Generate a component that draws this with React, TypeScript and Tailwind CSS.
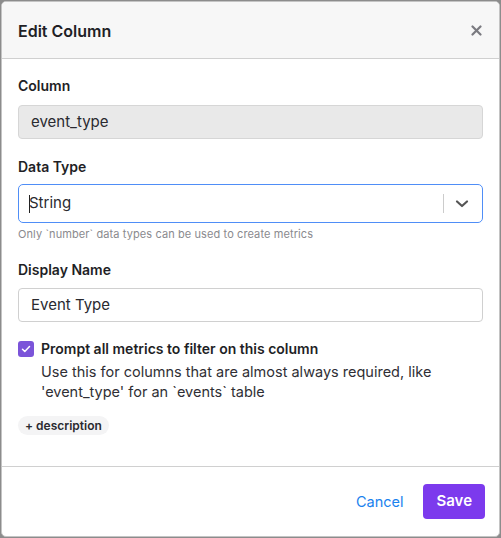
import { useState } from 'react'

export default function App() {
  const [prompt, setPrompt] = useState(true)

  return (
    <div className="h-[538px] w-[501px] bg-[#8c8c8c] p-px font-['Inter',sans-serif]">
      <div className="flex h-full flex-col overflow-hidden rounded-[5px] border border-[#c4c4c4] bg-white">
        {/* Header */}
        <div className="flex h-[57px] items-center justify-between border-b border-[#d0d0d0] bg-[#f7f7f7] pl-[16px] pr-[17px]">
          <h2 className="mt-[2px] text-[16px] font-semibold text-[#1f1f26]">Edit Column</h2>
          <svg width="11" height="11" viewBox="0 0 11 11" className="mt-px">
            <path d="M1.5 1.5l8 8M9.5 1.5l-8 8" stroke="#7a7a80" strokeWidth="2.2" strokeLinecap="round" />
          </svg>
        </div>

        {/* Body */}
        <div className="flex-1 px-[16px] pt-[18px]">
          <label className="block text-[14px] font-semibold leading-[18px] text-[#1f1f26]">Column</label>
          <div className="mt-[10px] flex h-[34px] items-center rounded-[4px] border border-[#d6d6d6] bg-[#e9e9e9] px-[12px] text-[15px] text-[#2a2a30]">
            event_type
          </div>

          <label className="mt-[19px] block text-[14px] font-semibold leading-[18px] text-[#1f1f26]">Data Type</label>
          <div className="mt-[8px] flex h-[39px] items-center rounded-[5px] border border-[#4f8ef7] bg-white pl-[10px]">
            <span className="h-[18px] w-px bg-[#222]" />
            <span className="-ml-px text-[15px] text-[#2a2a30]">String</span>
            <div className="ml-auto flex h-full items-center">
              <span className="h-[19px] w-px bg-[#cccccc]" />
              <svg width="38" height="20" viewBox="0 0 38 20">
                <path d="M13 7.5l5 4.5 5-4.5" fill="none" stroke="#555" strokeWidth="2.2" strokeLinecap="round" strokeLinejoin="round" />
              </svg>
            </div>
          </div>
          <p className="mt-[4px] text-[11px] leading-[15px] tracking-[0.1px] text-[#8a8a8e]">
            Only `number` data types can be used to create metrics
          </p>

          <label className="mt-[19px] block text-[14px] font-semibold leading-[18px] text-[#1f1f26]">Display Name</label>
          <div className="mt-[9px] flex h-[34px] items-center rounded-[4px] border border-[#d0d0d0] bg-white px-[12px] text-[15px] text-[#2a2a30]">
            Event Type
          </div>

          <div className="mt-[18px] flex items-start gap-[7px]">
            <button
              onClick={() => setPrompt(!prompt)}
              className={`mt-px flex h-[16px] w-[16px] shrink-0 items-center justify-center rounded-[3px] ${prompt ? 'bg-[#7b54d9]' : 'border border-[#aaa] bg-white'}`}
            >
              {prompt && (
                <svg width="10" height="10" viewBox="0 0 10 10">
                  <path d="M1.5 5.2l2.3 2.3 4.7-5" fill="none" stroke="white" strokeWidth="1.5" strokeLinecap="round" strokeLinejoin="round" />
                </svg>
              )}
            </button>
            <div>
              <div className="text-[14px] font-semibold leading-[18px] text-[#1f1f26]">
                Prompt all metrics to filter on this column
              </div>
              <p className="mt-[4px] text-[14.5px] leading-[20px] text-[#2f2f35]">
                Use this for columns that are almost always required, like 'event_type' for an `events` table
              </p>
            </div>
          </div>

          <button className="mt-[14px] rounded-full bg-[#f4f4f5] px-[7px] py-[2px] text-[12px] font-semibold leading-[15px] text-[#2a2a30]">
            + description
          </button>
        </div>

        {/* Footer */}
        <div className="flex h-[70px] items-center justify-end gap-[20px] border-t border-[#d0d0d0] pr-[14px]">
          <button className="text-[14.5px] text-[#1a82ee]">Cancel</button>
          <button className="h-[35px] rounded-[4px] bg-[#7c3aed] px-[13px] text-[15px] font-semibold text-white">
            Save
          </button>
        </div>
      </div>
    </div>
  )
}
